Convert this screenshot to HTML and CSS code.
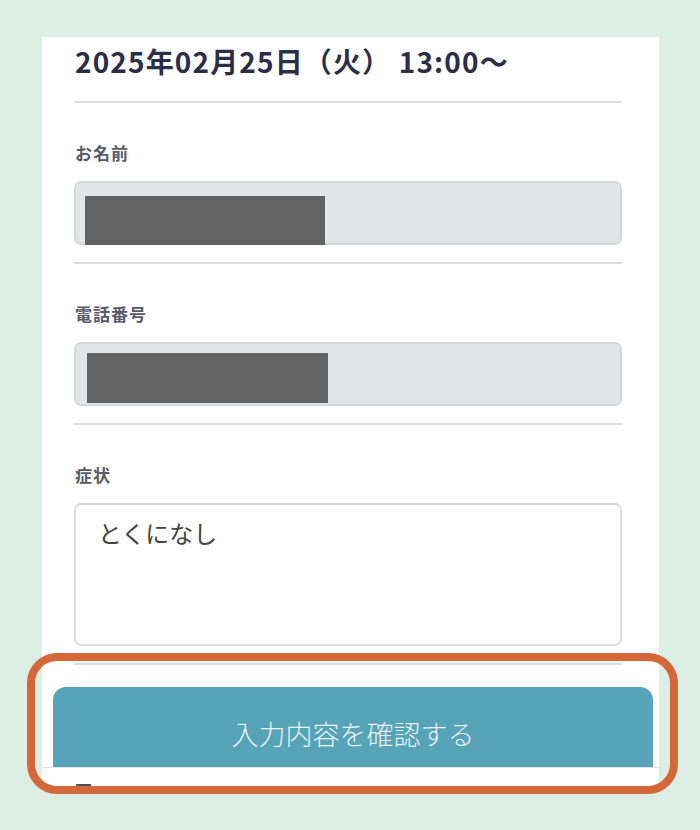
FILE: index.html
```html
<!DOCTYPE html>
<html lang="ja">
<head>
<meta charset="utf-8">
<title>予約フォーム</title>
<link rel="stylesheet" href="styles.css">
</head>
<body>
<div class="page">
  <div class="panel">
    <div class="datetime">2025年02月25日（火） 13:00～</div>
    <div class="field">
      <div class="label">お名前</div>
      <div class="input filled"><span class="redact r1"></span></div>
    </div>
    <div class="field">
      <div class="label">電話番号</div>
      <div class="input filled"><span class="redact r2"></span></div>
    </div>
    <div class="field">
      <div class="label">症状</div>
      <div class="textarea">とくになし</div>
    </div>
    <div class="footer">
      <button class="confirm" type="button">入力内容を確認する</button>
      <div class="peek"><span class="label">否</span></div>
    </div>
  </div>
  <div class="highlight"></div>
</div>
</body>
</html>
```
FILE: styles.css
```css
* { box-sizing: border-box; }
html, body { margin: 0; padding: 0; }
body {
  background: #ddeee4;
  font-family: "Noto Sans CJK JP", "Noto Sans", sans-serif;
  width: 700px;
  height: 830px;
  overflow: hidden;
}
.page {
  position: relative;
  padding-top: 37px;
  height: 830px;
}
.panel {
  margin-left: 42px;
  width: 617px;
  height: 753px;
  background: #ffffff;
  padding: 7px 37px 0 32px;
  overflow: hidden;
}
.datetime {
  font-size: 28px;
  line-height: 34px;
  font-weight: 700;
  letter-spacing: 1.15px;
  color: #2b2e46;
  padding-left: 1px;
  padding-bottom: 23px;
  border-bottom: 2px solid #dcdcdc;
}
.field {
  padding: 40px 0 17px;
  border-bottom: 2px solid #dcdcdc;
}
.label {
  display: block;
  font-size: 17px;
  line-height: 20px;
  font-weight: 700;
  letter-spacing: 1px;
  color: #565a6a;
  padding-left: 1px;
  margin-bottom: 18px;
}
.input {
  height: 64px;
  border: 2px solid #d6d8da;
  border-radius: 7px;
  background: #e3e5e6;
  display: flex;
  align-items: flex-start;
}
.redact {
  display: block;
  background: #636363;
}
.r1 { margin: 13px 0 0 9px; width: 240px; height: 49px; }
.r2 { margin: 9px 0 0 11px; width: 241px; height: 50px; }
.textarea {
  height: 143px;
  border: 2px solid #dedede;
  border-top-color: #d3d6da;
  border-radius: 7px;
  background: #fff;
  padding: 11px 22px;
  font-size: 24px;
  line-height: 34px;
  color: #444444;
}
.footer {
  margin: 22px -37px 0 -32px;
}
.confirm {
  display: block;
  width: 600px;
  height: 80px;
  margin-left: 11px;
  border: 0;
  border-radius: 13px 13px 0 0;
  background: #57a4b8;
  color: rgba(255, 255, 255, 0.88);
  font-family: "Noto Sans CJK JP", "Noto Sans", sans-serif;
  font-size: 27px;
  font-weight: 300;
  padding: 12px 0 0;
}
.peek {
  border-top: 1px solid #e3e3e3;
  height: 24px;
  padding: 13px 0 0 32px;
  overflow: hidden;
}
.peek .label {
  margin: 0;
  color: #4a4e62;
}
.highlight {
  position: absolute;
  left: 27px;
  top: 653px;
  width: 651px;
  height: 141px;
  border: 8px solid #d4683a;
  border-radius: 30px;
}
```
